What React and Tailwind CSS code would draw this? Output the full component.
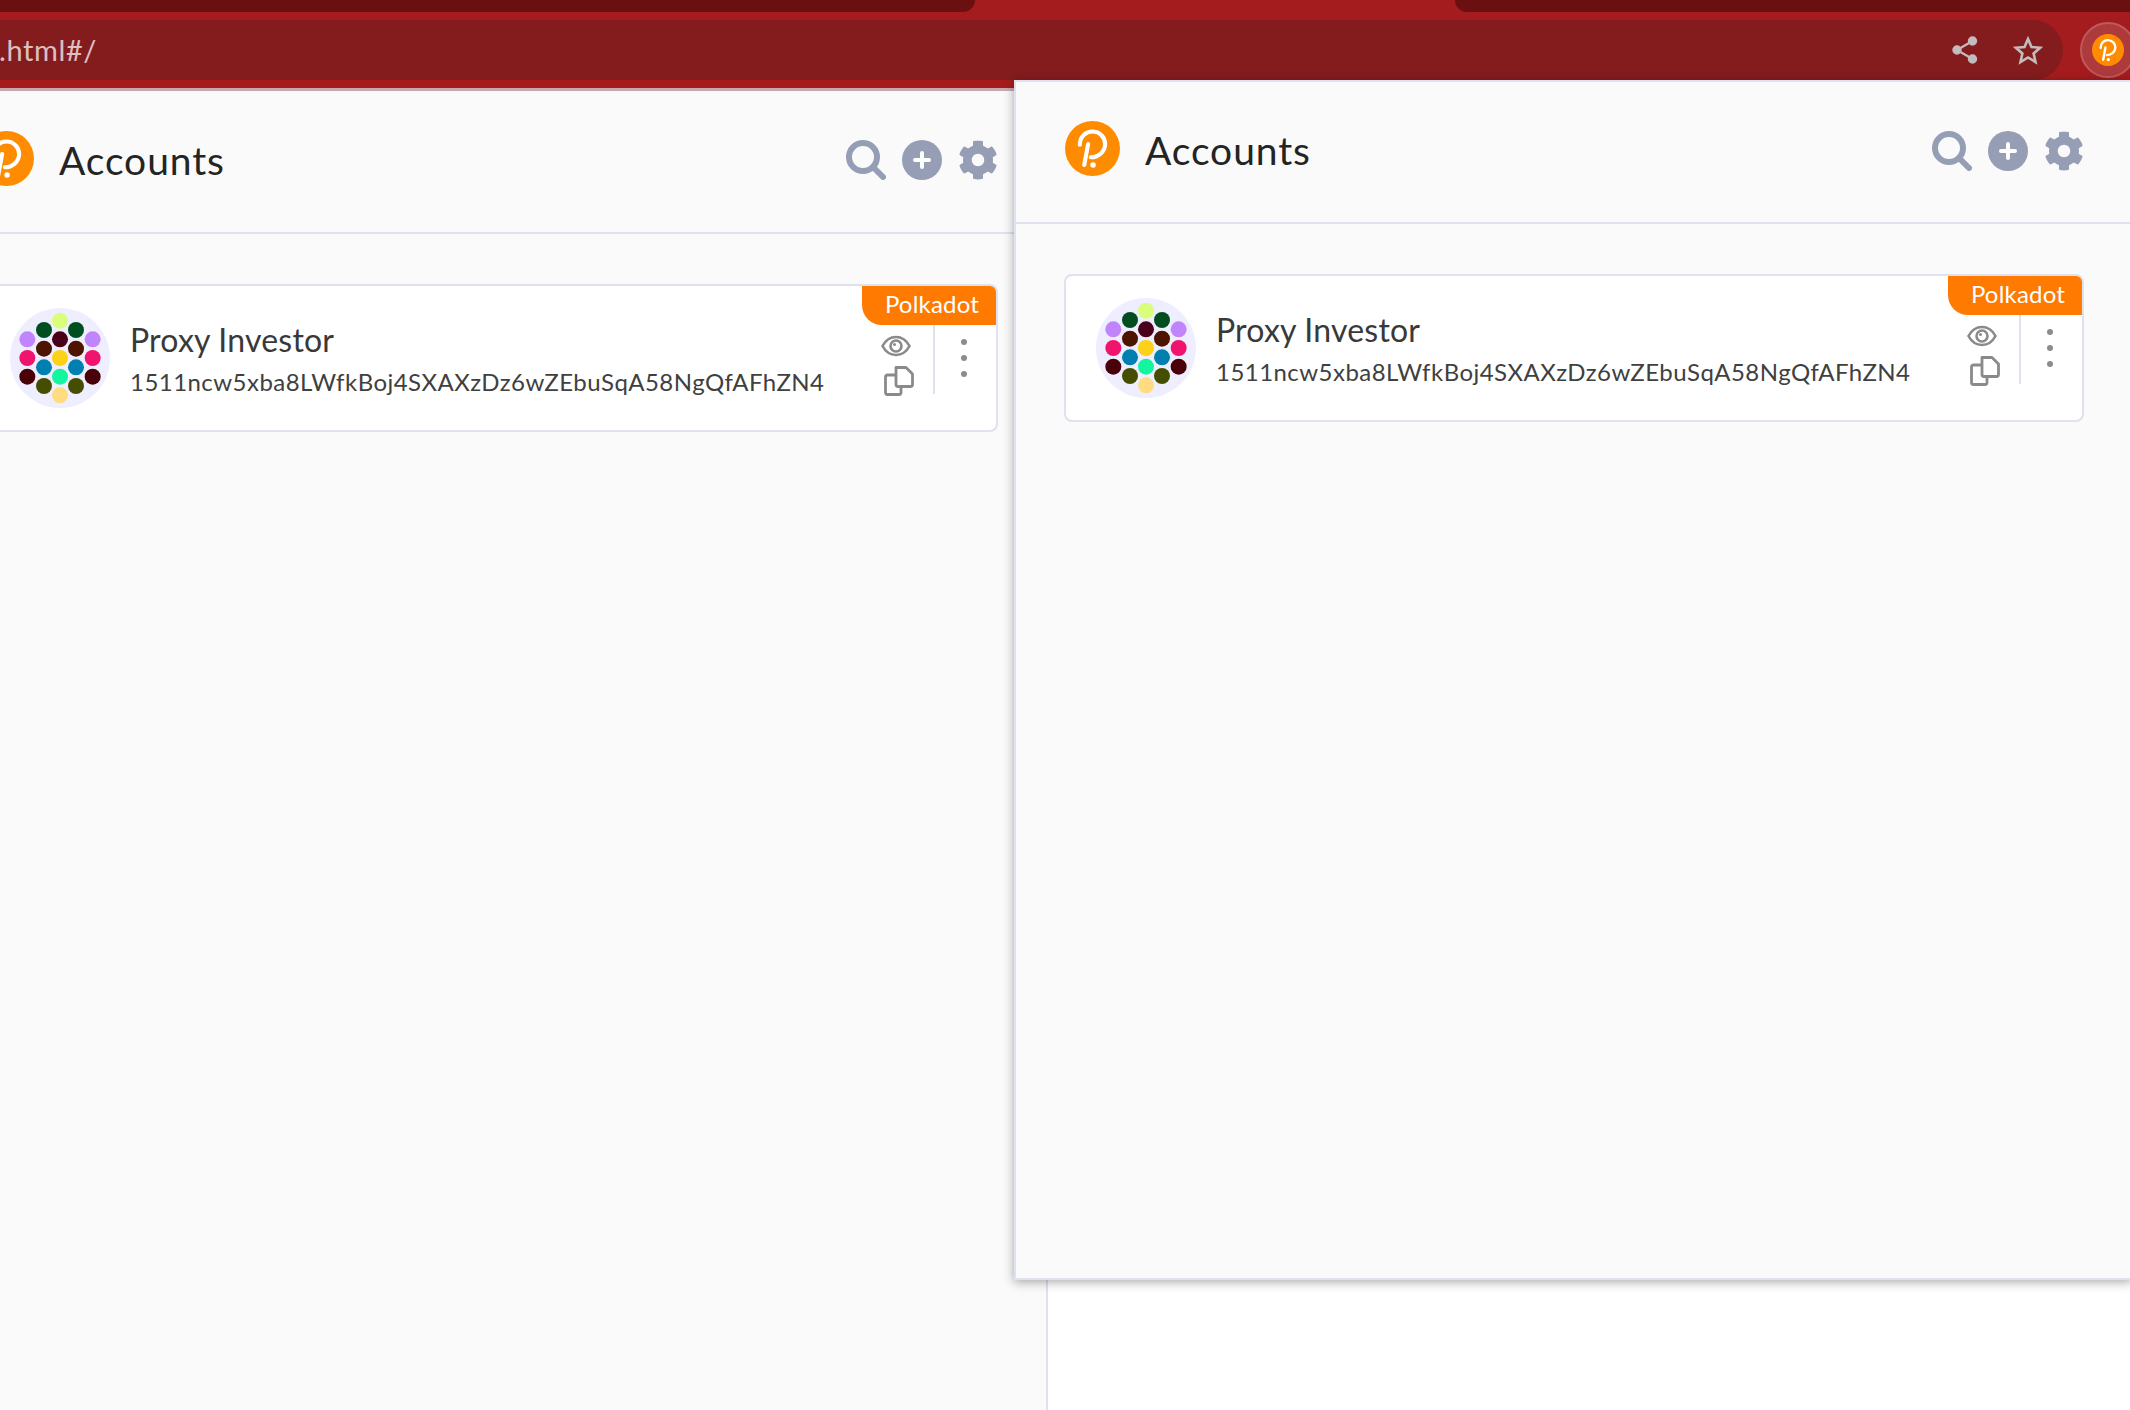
import React from 'react';
import { FaCog } from 'react-icons/fa';

const DOTS = [
  [258, 136, '#d9ff7a'], [210, 164, '#004d20'], [306, 164, '#004d20'], [160, 192, '#c084fc'], [258, 192, '#4a0018'],
  [356, 192, '#c084fc'], [210, 220, '#4d1500'], [306, 220, '#4d1500'], [160, 248, '#f0146e'], [258, 248, '#fcd116'],
  [356, 248, '#f0146e'], [210, 276, '#0080b0'], [306, 276, '#0080b0'], [160, 304, '#4a0008'], [258, 304, '#14f5a0'],
  [356, 304, '#4a0008'], [210, 332, '#454d00'], [306, 332, '#454d00'], [258, 360, '#ffdc80'],
];

const Logo = ({ size }) => (
  <svg width={size} height={size} viewBox="0 0 100 100" className="shrink-0">
    <circle cx="50" cy="50" r="50" fill="#ff8c00" />
    <path d="M27 43C27 28 38 19 50 19C63 19 73 30 73 42C73 56 60 66 47 66M42 42L35 80" fill="none" stroke="#fff" strokeWidth="7.5" strokeLinecap="round" />
    <circle cx="51" cy="80" r="5" fill="#fff" />
  </svg>
);

const Identicon = () => (
  <svg width="100" height="100" viewBox="108 98 300 300" className="shrink-0">
    <circle cx="258" cy="248" r="150" fill="#eeeeff" />
    {DOTS.map(([x, y, c], i) => <circle key={i} cx={x} cy={y} r="24" fill={c} />)}
  </svg>
);

const SearchIcon = () => (
  <svg width="40" height="40" viewBox="0 0 40 40" fill="none" stroke="#959eb4" strokeWidth="6" strokeLinecap="round">
    <circle cx="17" cy="17" r="14" />
    <path d="M27 27L37 37" />
  </svg>
);

const PlusIcon = () => (
  <svg width="40" height="40" viewBox="0 0 40 40">
    <circle cx="20" cy="20" r="20" fill="#959eb4" />
    <path d="M20 13V27M13 20H27" stroke="#fff" strokeWidth="4" strokeLinecap="round" />
  </svg>
);

const EyeIcon = () => (
  <svg width="30" height="24" viewBox="0 0 30 24" fill="none" stroke="#8a8a8a" strokeWidth="2.6" className="-translate-x-[4px]">
    <path d="M1.5 12C5 5.5 10 3 15 3C20 3 25 5.5 28.5 12C25 18.5 20 21 15 21C10 21 5 18.5 1.5 12Z" />
    <circle cx="15" cy="12" r="5.5" />
    <circle cx="13.5" cy="10.5" r="1.5" fill="#8a8a8a" stroke="none" />
  </svg>
);

const CopyIcon = () => (
  <svg width="30" height="30" viewBox="0 0 30 30" fill="none" stroke="#8a8a8a" strokeWidth="2.8" strokeLinejoin="round" className="-translate-x-[1px]">
    <path d="M12 1.5H22L28.5 8V18.5A2 2 0 0 1 26.5 20.5H14A2 2 0 0 1 12 18.5Z" />
    <path d="M11 9H3.5A2 2 0 0 0 1.5 11V26.5A2 2 0 0 0 3.5 28.5H15A2 2 0 0 0 17 26.5V21" />
  </svg>
);

const ShareIcon = () => (
  <svg width="26" height="28" viewBox="0 0 26 28" fill="#c4bcbc" stroke="#c4bcbc" strokeWidth="2.2">
    <circle cx="20.5" cy="5" r="3.6" />
    <circle cx="5" cy="14" r="3.6" />
    <circle cx="20.5" cy="23" r="3.6" />
    <path d="M20.5 5L5 14L20.5 23" fill="none" />
  </svg>
);

const StarIcon = () => (
  <svg width="30" height="29" viewBox="0 0 30 29" fill="none" stroke="#c4bcbc" strokeWidth="2.6">
    <polygon points="15,3 18.5,11 27,11.8 20.6,17.4 22.5,26 15,21.5 7.5,26 9.4,17.4 3,11.8 11.5,11" />
  </svg>
);

const AccountsView = ({ headerClass }) => (
  <div>
    <div className={`flex items-center border-b-2 border-[#dee2ef] pb-[7px] ${headerClass}`}>
      <Logo size={55} />
      <h1 className="ml-[25px] text-[39px] leading-none text-[#242424] font-normal tracking-[0.9px] translate-y-[2px]">Accounts</h1>
      <div className="ml-auto flex items-center gap-4 translate-y-[2px]">
        <SearchIcon />
        <PlusIcon />
        <FaCog size={40} color="#959eb4" />
      </div>
    </div>
    <div className="relative mt-[50px] ml-[-1px] h-[148px] flex items-center pl-[30px] bg-white border-2 border-[#dee2ef] rounded-lg overflow-hidden">
      <Identicon />
      <div className="ml-[20px] flex flex-col">
        <span className="mt-[1px] text-[32px] leading-[40px] text-[#393939] tracking-[0.2px]">Proxy Investor</span>
        <span className="mt-[7px] text-[24px] leading-[30px] text-[#404040] tracking-[0.46px]">1511ncw5xba8LWfkBoj4SXAXzDz6wZEbuSqA58NgQfAFhZN4</span>
      </div>
      <div className="absolute top-0 right-0 w-[134px] h-[39px] flex items-center justify-center pl-[6px] pb-[4px] bg-[#ff7a00] rounded-bl-[20px] text-[24px] tracking-[0.2px] text-white">Polkadot</div>
      <div className="ml-auto self-start mt-[38px] flex">
        <div className="w-[60px] pt-[10px] pr-[6px] flex flex-col items-center gap-[8px]">
          <EyeIcon />
          <CopyIcon />
        </div>
        <div className="w-[2px] h-[70px] bg-[#dee2ef]" />
        <div className="w-[61px] pt-[15px] pr-[3px] flex flex-col items-center gap-[10px]">
          <span className="w-[6px] h-[6px] rounded-full bg-[#8c8c8c]" />
          <span className="w-[6px] h-[6px] rounded-full bg-[#8c8c8c]" />
          <span className="w-[6px] h-[6px] rounded-full bg-[#8c8c8c]" />
        </div>
      </div>
    </div>
  </div>
);

const BrowserBar = () => (
  <div className="relative h-[88px] bg-[#a51c1e] border-b-[3px] border-[#c9a9b0] box-content shrink-0">
    <div className="flex justify-between h-[12px]">
      <div className="w-[975px] bg-[#6b1010] rounded-br-xl" />
      <div className="w-[675px] bg-[#6b1010] rounded-bl-xl" />
    </div>
    <div className="mt-[8px] h-[60px] w-[2063px] flex items-center bg-[#841c1e] rounded-r-[30px]">
      <span className="text-[29px] tracking-[0.6px] text-[#dcc0c0] -ml-[1px]">.html#/</span>
      <div className="ml-auto flex items-center gap-[35px] mr-[20px]">
        <ShareIcon />
        <StarIcon />
      </div>
    </div>
    <div className="absolute left-[2080px] top-[22px] w-[56px] h-[56px] rounded-full bg-[#ae3a3c] border-2 border-[#bd5a5b] flex items-center justify-center">
      <Logo size={32} />
    </div>
  </div>
);

export default function App() {
  return (
    <div className="relative w-[2130px] h-[1410px] overflow-hidden bg-white flex flex-col font-['Lato','Noto_Sans',sans-serif]">
      <BrowserBar />
      <div className="flex-1 -ml-[72px] w-[1120px] pl-[51px] pr-[48px] bg-[#fafafa] border-r-2 border-[#dee2ef]">
        <AccountsView headerClass="h-[143px] -ml-[51px] pl-[51px] -mr-[48px] pr-[48px]" />
      </div>
      <div className="absolute left-[1014px] top-[80px] w-[1118px] h-[1200px] pl-[49px] pr-[46px] bg-[#fafafa] border-2 border-[#dee2ef] shadow-[0_2px_10px_rgba(0,0,0,0.35)]">
        <AccountsView headerClass="h-[142px] -ml-[49px] pl-[49px] -mr-[46px] pr-[46px]" />
      </div>
    </div>
  );
}
